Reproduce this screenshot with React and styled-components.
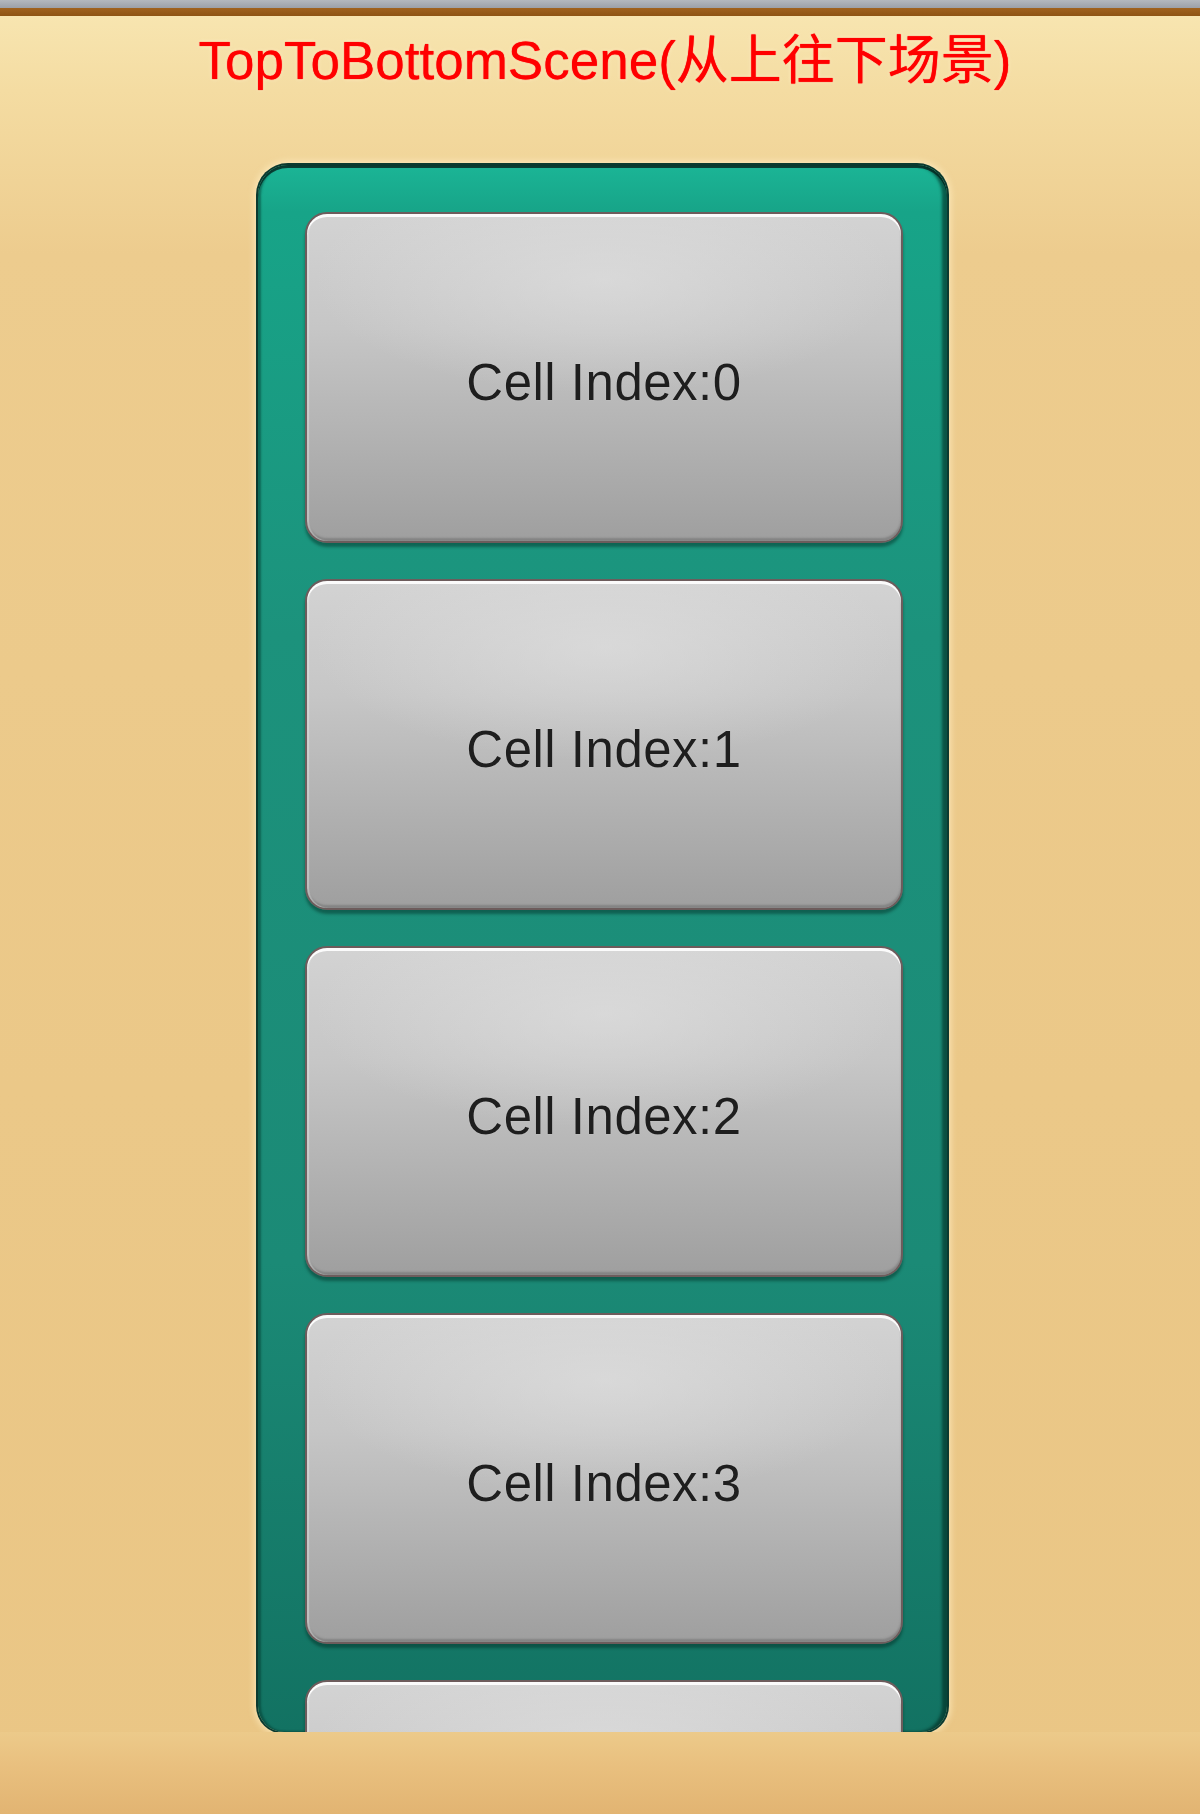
import React from 'react';
import styled, { createGlobalStyle } from 'styled-components';

const GlobalStyle = createGlobalStyle`
  html, body {
    margin: 0;
    padding: 0;
  }
  body {
    font-family: "Liberation Sans", Arial, "Noto Sans CJK SC", sans-serif;
  }
`;

const Page = styled.div`
  width: 1200px;
  height: 1814px;
  overflow: hidden;
  display: flex;
  flex-direction: column;
  background: linear-gradient(180deg, #f8e7b3 0%, #f4dca2 5%, #edcc8e 14%, #ebc888 60%, #eac685 100%);
`;

const StatusBar = styled.div`
  height: 8px;
  background: linear-gradient(180deg, #b4b8be, #9ca0a8);
`;

const BrownStripe = styled.div`
  height: 8px;
  background: linear-gradient(180deg, #a0621f, #8e5414);
`;

const Header = styled.div`
  height: 88px;
  display: flex;
  align-items: center;
  justify-content: center;
  padding-left: 10px;
`;

const Title = styled.h1`
  margin: 0;
  font-family: "Liberation Sans", Arial, "Noto Sans CJK SC", sans-serif;
  font-weight: normal;
  font-size: 53px;
  line-height: 1;
  color: #ff0000;
  text-shadow: 0 0 1px #ff0000, 0 0 4px rgba(255, 240, 200, 0.9);
`;

const Stage = styled.div`
  flex: 1;
  display: flex;
  justify-content: center;
  padding: 61px 0 0 5px;
`;

const Panel = styled.div`
  box-sizing: border-box;
  width: 689px;
  height: 1567px;
  padding: 47px 44px 0 47px;
  display: flex;
  flex-direction: column;
  gap: 36px;
  overflow: hidden;
  border-radius: 30px 30px 26px 26px;
  background: linear-gradient(180deg, #1bb596 0%, #17a488 3%, #1c927c 30%, #1b8a76 70%, #127262 100%);
  box-shadow:
    inset 3px 0 2px rgba(0, 50, 40, 0.45),
    inset -5px 0 3px rgba(0, 40, 30, 0.6),
    inset 0 3px 0 #0b4036,
    0 0 0 2px #0b3a30,
    0 0 6px 4px rgba(255, 238, 195, 0.7);
`;

const Cell = styled.div`
  box-sizing: border-box;
  flex: 0 0 331px;
  padding-top: 10px;
  border-radius: 22px;
  border: 2px solid #6d5c5c;
  display: flex;
  align-items: center;
  justify-content: center;
  background:
    radial-gradient(ellipse 70% 50% at 50% 20%, rgba(225, 225, 225, 0.6), rgba(225, 225, 225, 0) 70%),
    linear-gradient(180deg, #d3d3d3 0%, #c6c6c6 35%, #b1b1b1 70%, #9f9f9f 100%);
  box-shadow:
    inset 0 3px 0 rgba(255, 255, 255, 0.9),
    inset 2px 0 1px rgba(255, 255, 255, 0.35),
    inset 0 -3px 2px rgba(80, 80, 80, 0.35),
    0 4px 3px rgba(0, 40, 30, 0.45);
`;

const CellLabel = styled.span`
  font-family: "Liberation Sans", Arial, sans-serif;
  font-size: 51px;
  letter-spacing: 0.5px;
  color: #1e1e1e;
  text-shadow: 0 0 1px rgba(255, 255, 255, 0.6);
`;

const Footer = styled.div`
  height: 82px;
  background: linear-gradient(180deg, #ecca8a 0%, #e9c07f 40%, #e2b472 100%);
`;

// the fifth cell only peeks in at the bottom of the scroll view
const cells = [0, 1, 2, 3, 4];
const visibleLabels = 4;

export default function App() {
  return (
    <>
      <GlobalStyle />
      <Page>
        <StatusBar />
        <BrownStripe />
        <Header>
          <Title>TopToBottomScene(从上往下场景)</Title>
        </Header>
        <Stage>
          <Panel>
            {cells.map((i) => (
              <Cell key={i}>
                {i < visibleLabels && <CellLabel>Cell Index:{i}</CellLabel>}
              </Cell>
            ))}
          </Panel>
        </Stage>
        <Footer />
      </Page>
    </>
  );
}
